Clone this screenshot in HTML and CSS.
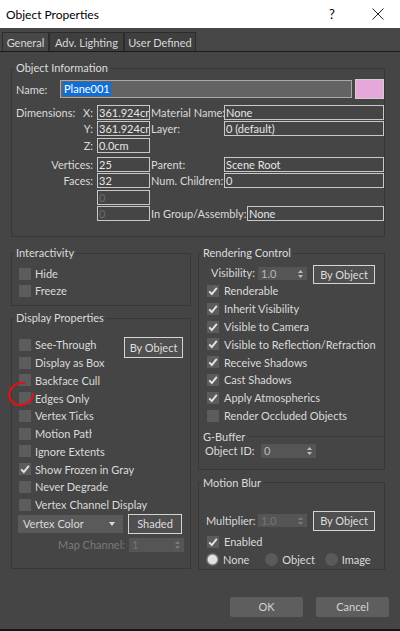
FILE: index.html
```html
<!DOCTYPE html>
<html lang="en">
<head>
<meta charset="utf-8">
<title>Object Properties</title>
<link rel="stylesheet" href="styles.css">
</head>
<body>
<div class="window">
  <header class="titlebar">
    <span class="title">Object Properties</span>
    <span class="help">?</span>
    <svg class="close" width="12" height="12" viewBox="0 0 12 12"><path d="M0.5 0.5 L11.5 11.5 M11.5 0.5 L0.5 11.5"/></svg>
  </header>
  <nav class="tabs">
    <div class="tab t1 active">General</div>
    <div class="tab t2">Adv. Lighting</div>
    <div class="tab t3">User Defined</div>
  </nav>
  <main class="page">
    <fieldset class="group info">
      <legend>Object Information</legend>
      <div class="info-body">
        <div class="name-row">
          <span class="name-lbl">Name:</span>
          <div class="name-input"><span class="sel">Plane001</span></div>
          <div class="swatch"></div>
        </div>
        <div class="irow mt6">
          <span class="l1 split"><span>Dimensions:</span><span>X:</span></span>
          <span class="box b1">361.924cm</span>
          <span class="l2">Material Name:</span>
          <span class="box b2">None</span>
        </div>
        <div class="irow mt1">
          <span class="l1">Y:</span>
          <span class="box b1">361.924cm</span>
          <span class="l2">Layer:</span>
          <span class="box b2">0 (default)</span>
        </div>
        <div class="irow mt2">
          <span class="l1">Z:</span>
          <span class="box b1">0.0cm</span>
        </div>
        <div class="irow mt4">
          <span class="l1">Vertices:</span>
          <span class="box b1">25</span>
          <span class="l2">Parent:</span>
          <span class="box b2">Scene Root</span>
        </div>
        <div class="irow mt1">
          <span class="l1">Faces:</span>
          <span class="box b1">32</span>
          <span class="l2">Num. Children:</span>
          <span class="box b2">0</span>
        </div>
        <div class="irow mt2">
          <span class="l1"></span>
          <span class="box b1 dis">0</span>
        </div>
        <div class="irow mt1">
          <span class="l1"></span>
          <span class="box b1 dis">0</span>
          <span class="l2 wide">In Group/Assembly:</span>
          <span class="box b2 narrow">None</span>
        </div>
      </div>
    </fieldset>

    <div class="cols">
      <div class="col left">
        <fieldset class="group inter">
          <legend>Interactivity</legend>
          <div class="inter-body">
            <div class="chk"><span class="cb"></span><span>Hide</span></div>
            <div class="chk"><span class="cb"></span><span>Freeze</span></div>
          </div>
        </fieldset>

        <fieldset class="group disp">
          <legend>Display Properties</legend>
          <div class="disp-body">
            <div class="disp-top">
              <div class="disp-top-rows">
                <div class="chk"><span class="cb"></span><span>See-Through</span></div>
                <div class="chk"><span class="cb"></span><span>Display as Box</span></div>
              </div>
              <button class="btn obj">By Object</button>
            </div>
            <div class="chk"><span class="cb"></span><span>Backface Cull</span></div>
            <div class="chk"><span class="cb"></span><span>Edges Only</span></div>
            <div class="chk"><span class="cb"></span><span>Vertex Ticks</span></div>
            <div class="chk"><span class="cb"></span><span class="clip">Motion Path</span></div>
            <div class="chk"><span class="cb"></span><span>Ignore Extents</span></div>
            <div class="chk"><span class="cb"><svg width="12" height="12" viewBox="0 0 12 12"><path d="M2.2 6.4 L4.8 9 L9.8 2.8"/></svg></span><span>Show Frozen in Gray</span></div>
            <div class="chk"><span class="cb"></span><span>Never Degrade</span></div>
            <div class="chk"><span class="cb"></span><span>Vertex Channel Display</span></div>
            <div class="vc-row">
              <div class="dropdown"><span>Vertex Color</span><svg width="6" height="4" viewBox="0 0 6 4"><path d="M0 0 H6 L3 4 Z"/></svg></div>
              <button class="btn shaded">Shaded</button>
            </div>
            <div class="map-row">
              <span class="map-lbl">Map Channel:</span>
              <div class="spin dis"><span>1</span><svg width="5" height="8" viewBox="0 0 5 8"><path d="M0 3 L2.5 0 L5 3 Z M0 5 L2.5 8 L5 5 Z"/></svg></div>
            </div>
          </div>
        </fieldset>
      </div>

      <div class="col right">
        <fieldset class="group rend">
          <legend>Rendering Control</legend>
          <div class="rend-body">
            <div class="vis-row">
              <span class="vis-lbl">Visibility:</span>
              <div class="spin"><span>1.0</span><svg width="5" height="8" viewBox="0 0 5 8"><path d="M0 3 L2.5 0 L5 3 Z M0 5 L2.5 8 L5 5 Z"/></svg></div>
              <button class="btn vis">By Object</button>
            </div>
            <div class="chk"><span class="cb"><svg width="12" height="12" viewBox="0 0 12 12"><path d="M2.2 6.4 L4.8 9 L9.8 2.8"/></svg></span><span>Renderable</span></div>
            <div class="chk"><span class="cb"><svg width="12" height="12" viewBox="0 0 12 12"><path d="M2.2 6.4 L4.8 9 L9.8 2.8"/></svg></span><span>Inherit Visibility</span></div>
            <div class="chk"><span class="cb"><svg width="12" height="12" viewBox="0 0 12 12"><path d="M2.2 6.4 L4.8 9 L9.8 2.8"/></svg></span><span>Visible to Camera</span></div>
            <div class="chk"><span class="cb"><svg width="12" height="12" viewBox="0 0 12 12"><path d="M2.2 6.4 L4.8 9 L9.8 2.8"/></svg></span><span>Visible to Reflection/Refraction</span></div>
            <div class="chk"><span class="cb"><svg width="12" height="12" viewBox="0 0 12 12"><path d="M2.2 6.4 L4.8 9 L9.8 2.8"/></svg></span><span>Receive Shadows</span></div>
            <div class="chk"><span class="cb"><svg width="12" height="12" viewBox="0 0 12 12"><path d="M2.2 6.4 L4.8 9 L9.8 2.8"/></svg></span><span>Cast Shadows</span></div>
            <div class="chk"><span class="cb"><svg width="12" height="12" viewBox="0 0 12 12"><path d="M2.2 6.4 L4.8 9 L9.8 2.8"/></svg></span><span>Apply Atmospherics</span></div>
            <div class="chk"><span class="cb"></span><span>Render Occluded Objects</span></div>
            <div class="gbuf"><span>G-Buffer</span><span class="line"></span></div>
            <div class="objid-row">
              <span class="objid-lbl">Object ID:</span>
              <div class="spin"><span>0</span><svg width="5" height="8" viewBox="0 0 5 8"><path d="M0 3 L2.5 0 L5 3 Z M0 5 L2.5 8 L5 5 Z"/></svg></div>
            </div>
          </div>
        </fieldset>

        <fieldset class="group motion">
          <legend>Motion Blur</legend>
          <div class="motion-body">
            <div class="mult-row">
              <span class="mult-lbl">Multiplier:</span>
              <div class="spin dis"><span>1.0</span><svg width="5" height="8" viewBox="0 0 5 8"><path d="M0 3 L2.5 0 L5 3 Z M0 5 L2.5 8 L5 5 Z"/></svg></div>
              <button class="btn vis">By Object</button>
            </div>
            <div class="chk enabled"><span class="cb"><svg width="12" height="12" viewBox="0 0 12 12"><path d="M2.2 6.4 L4.8 9 L9.8 2.8"/></svg></span><span>Enabled</span></div>
            <div class="radio-row">
              <div class="radio"><span class="rb on"></span><span>None</span></div>
              <div class="radio"><span class="rb"></span><span>Object</span></div>
              <div class="radio"><span class="rb"></span><span>Image</span></div>
            </div>
          </div>
        </fieldset>
      </div>
    </div>

    <div class="actions">
      <button class="btn act">OK</button>
      <button class="btn act">Cancel</button>
    </div>
  </main>
  <svg class="mark" width="32" height="30" viewBox="0 0 32 30"><path d="M18 3 C10 2, 4 7, 3.5 14 C3 21, 8 25, 14 25 C21 25, 27 21, 27 14"/></svg>
</div>
</body>
</html>
```

FILE: styles.css
```css
* { box-sizing: border-box; }

body {
  margin: 0;
  width: 400px;
  height: 631px;
  overflow: hidden;
  background: #454545;
  font-family: Lato, "Noto Sans", "DejaVu Sans", sans-serif;
  font-size: 11px;
  color: #dadada;
}

.window {
  position: relative;
  height: 631px;
  display: flex;
  flex-direction: column;
  border-bottom: 2px solid #161616;
}

/* title bar */
.titlebar {
  height: 28px;
  flex: none;
  background: #fff;
  color: #000;
  display: flex;
  align-items: center;
  padding-left: 6px;
}
.title { font-size: 12px; }
.help { margin-left: auto; font-size: 13px; width: 8px; margin-right: 35px; }
.close { stroke: #222; stroke-width: 1; fill: none; margin-right: 16px; }

/* tabs */
.tabs {
  height: 24px;
  flex: none;
  display: flex;
  align-items: flex-end;
  padding-left: 2px;
  background: #464646;
  border-bottom: 1px solid #1b1b1b;
}
.tab {
  height: 19px;
  border: 1px solid #2c2c2c;
  border-bottom: none;
  background: #3f3f3f;
  display: flex;
  align-items: center;
  justify-content: center;
  color: #d8d8d8;
}
.tab.active { background: #474747; }
.t1 { width: 47px; }
.t2 { width: 75px; }
.t3 { width: 72px; }

/* page */
.page {
  flex: 1;
  padding: 9px 0 0 11px;
  display: flex;
  flex-direction: column;
}

.group {
  margin: 0;
  padding: 0;
  border: 1px solid #383838;
  min-width: 0;
}
.group legend {
  padding: 0 2px;
  margin-left: 2px;
  line-height: 14px;
  color: #dcdcdc;
}

/* object information */
.info { width: 374px; }
.info-body { padding: 4px 0 15px 4px; }

.name-row { display: flex; height: 20px; align-items: center; }
.name-lbl { width: 44px; }
.name-input {
  width: 292px;
  height: 18px;
  background: #636363;
  border: 1px solid #a9a9a9;
  padding-left: 2px;
  display: flex;
  align-items: center;
}
.sel {
  background: #0f6fd6;
  color: #fff;
  height: 14px;
  line-height: 14px;
  padding: 0 1px;
}
.swatch {
  width: 29px;
  height: 20px;
  margin-left: 3px;
  background: #e6a8da;
  border: 1px solid #cfcfcf;
}

.irow { display: flex; height: 15px; }
.mt1 { margin-top: 1px; }
.mt2 { margin-top: 2px; }
.mt4 { margin-top: 4px; }
.mt6 { margin-top: 6px; }

.l1 {
  width: 81px;
  display: flex;
  align-items: center;
  justify-content: flex-end;
  padding-right: 4px;
}
.l1.split { justify-content: space-between; }
.l2 {
  width: 74px;
  padding-left: 1px;
  display: flex;
  align-items: center;
  white-space: nowrap;
}
.l2.wide { width: 97px; }

.box {
  border: 1px solid #c8c8c8;
  padding-left: 1px;
  line-height: 13px;
  white-space: nowrap;
  overflow: hidden;
  color: #e6e6e6;
}
.b1 { width: 53px; }
.b2 { width: 160px; }
.b2.narrow { width: 137px; }
.box.dis { color: #6c6c6c; }

/* columns */
.cols { display: flex; gap: 7px; margin-top: 9px; }
.col { display: flex; flex-direction: column; }
.left { width: 180px; }
.right { width: 187px; }

.chk { display: flex; align-items: center; gap: 4px; height: 17px; white-space: nowrap; }
.cb {
  width: 12px;
  height: 12px;
  flex: none;
  background: #5c5c5c;
  display: block;
}
.cb svg { display: block; fill: none; stroke: #e4e4e4; stroke-width: 1.9; }

.inter-body { padding: 5px 0 6px 7px; }

.disp { margin-top: 5px; }
.disp-body { padding: 11px 0 16px 6px; }
.disp .chk { height: 17.75px; padding-left: 1px; }
.disp-top { display: flex; align-items: flex-start; }
.disp-top-rows { width: 106px; }
.clip { flex: none; width: 57px; overflow: hidden; }

.btn {
  font: inherit;
  color: #dedede;
  background: #4f4f4f;
  border: 1px solid #d4d4d4;
  padding: 0;
  cursor: default;
}
.btn.obj { width: 59px; height: 21px; margin-top: 1px; }

.vc-row { display: flex; align-items: center; height: 20px; gap: 5px; }
.dropdown {
  width: 105px;
  height: 18px;
  background: #5a5a5a;
  display: flex;
  align-items: center;
  justify-content: space-between;
  padding: 0 8px 0 5px;
}
.dropdown svg { fill: #dcdcdc; }
.btn.shaded { width: 54px; height: 20px; }

.map-row { display: flex; align-items: center; height: 14px; margin-top: 4px; gap: 4px; }
.map-lbl { width: 107px; text-align: right; color: #7a7a7a; }

.spin {
  width: 55px;
  height: 14px;
  background: #555;
  display: flex;
  align-items: center;
  justify-content: space-between;
  padding: 0 4px 0 3px;
  color: #b9b9b9;
}
.spin svg { fill: #bdbdbd; }
.spin.dis { color: #757575; }
.spin.dis svg { fill: #7a7a7a; }

/* rendering control */
.rend-body { padding: 5px 0 11px 8px; }
.rend .chk, .motion .chk { height: 17.8px; gap: 5px; }
.vis-row { display: flex; align-items: flex-start; height: 17.1px; }
.vis-lbl { width: 51px; padding-left: 4px; line-height: 16px; }
.vis-row .spin { width: 49px; height: 13px; margin-top: 2px; }
.btn.vis { width: 62px; height: 19px; margin-left: 6px; flex: none; }

.gbuf {
  display: flex;
  align-items: center;
  height: 14px;
  margin: 5.5px 0 0 -4px;
  gap: 3px;
}
.gbuf .line { flex: 1; border-top: 1px solid #393939; margin-right: 1px; }

.objid-row { display: flex; align-items: center; height: 14px; margin-left: -2px; }
.objid-lbl { width: 56px; }

/* motion blur */
.motion { margin-top: 6px; }
.motion-body { padding: 21px 0 1px 8px; }
.mult-row { display: flex; align-items: center; height: 20px; }
.mult-lbl { width: 52px; margin-left: -1px; }
.mult-row .spin { width: 49px; height: 13px; }
.mult-row .btn.vis { height: 20px; }
.enabled { margin-top: 2px; }

.radio-row { display: flex; align-items: center; height: 17px; margin-left: -1px; }
.radio { display: flex; align-items: center; gap: 4px; width: 61px; }
.rb {
  width: 13px;
  height: 13px;
  border-radius: 50%;
  background: #5a5a5a;
  flex: none;
}
.rb.on { background: radial-gradient(circle, #e2e2e2 0 4.3px, #7c7c7c 5.3px, #5f5f5f 6.5px); }

/* dialog buttons */
.actions {
  display: flex;
  justify-content: flex-end;
  gap: 13px;
  padding-right: 11px;
  margin-top: 27px;
}
.btn.act {
  width: 73px;
  height: 20px;
  background: #5e5e5e;
  border: none;
  border-radius: 2px;
  color: #d4d4d4;
}

/* red annotation circle */
.mark {
  position: absolute;
  left: 6px;
  top: 380px;
  fill: none;
  stroke: #d8141c;
  stroke-width: 2.3;
  stroke-linecap: round;
}
```
